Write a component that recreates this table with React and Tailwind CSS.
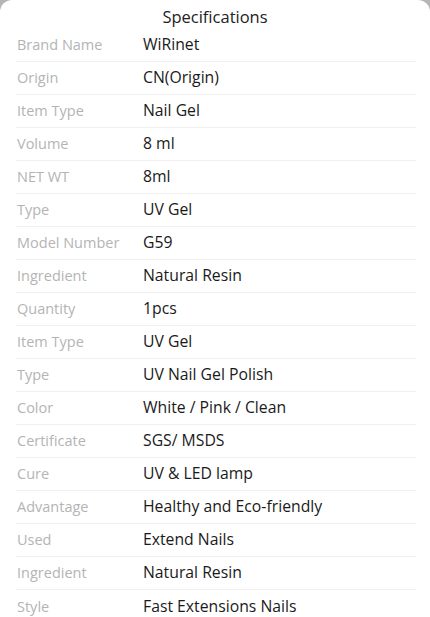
import React from "react";

const rows = [
  ["Brand Name", "WiRinet"],
  ["Origin", "CN(Origin)"],
  ["Item Type", "Nail Gel"],
  ["Volume", "8 ml"],
  ["NET WT", "8ml"],
  ["Type", "UV Gel"],
  ["Model Number", "G59"],
  ["Ingredient", "Natural Resin"],
  ["Quantity", "1pcs"],
  ["Item Type", "UV Gel"],
  ["Type", "UV Nail Gel Polish"],
  ["Color", "White / Pink / Clean"],
  ["Certificate", "SGS/ MSDS"],
  ["Cure", "UV & LED lamp"],
  ["Advantage", "Healthy and Eco-friendly"],
  ["Used", "Extend Nails"],
  ["Ingredient", "Natural Resin"],
  ["Style", "Fast Extensions Nails"],
];

export default function App() {
  return (
    <div className="w-[430px] h-[617px] overflow-hidden bg-[#b5b5b5]" style={{ fontFamily: '"Open Sans", sans-serif' }}>
      <div className="bg-white rounded-t-[12px] h-full">
        <div className="h-[29px] flex items-center justify-center pt-[6px] text-[16.5px] text-[#222]">
          Specifications
        </div>
        <div className="pl-[16px] pr-[14px]">
          {rows.map(([k, v], i) => (
            <div
              key={i}
              className={`flex items-center h-[33px] ${i < rows.length - 1 ? "border-b border-[#efefef]" : ""}`}
            >
              <div className="w-[127px] pl-[1px] text-[14.5px] text-[#b4b4b4]">{k}</div>
              <div className="text-[15.75px] text-[#1a1a1a]">{v}</div>
            </div>
          ))}
        </div>
      </div>
    </div>
  );
}
